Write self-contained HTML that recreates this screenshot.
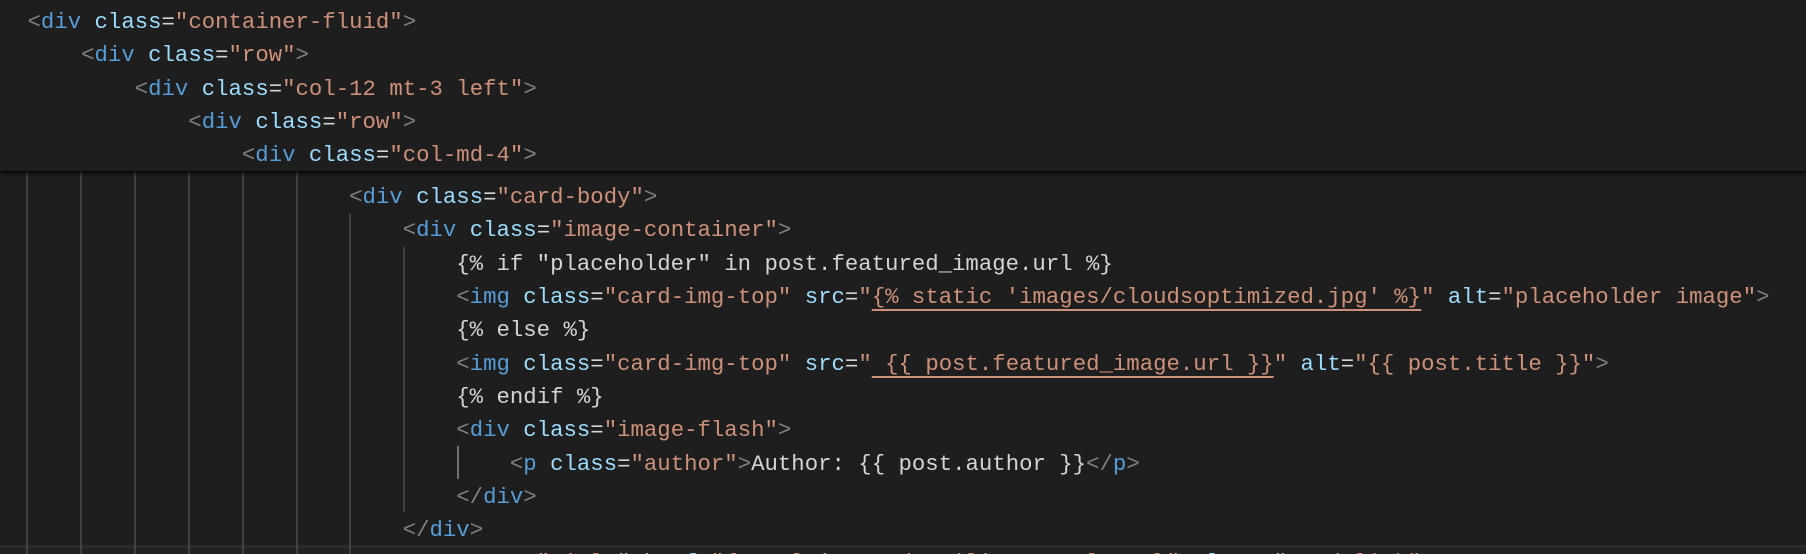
<!DOCTYPE html>
<html><head><meta charset="utf-8"><style>
html,body{margin:0;padding:0;background:#1e1e1e;width:1806px;height:554px;overflow:hidden;}
.ed{position:relative;width:1806px;height:554px;font-family:"Liberation Mono",monospace;font-size:22.33px;}
.l{position:absolute;left:27.5px;height:33.33px;line-height:33.33px;white-space:pre;color:#d4d4d4;}
.p{color:#808080}.t{color:#569cd6}.a{color:#9cdcfe}.s{color:#ce9178}
.u{text-decoration:underline;text-decoration-color:#ce9178;text-decoration-thickness:2px;text-underline-offset:6px;}
.g{position:absolute;width:2px;background:#404040;}
.hdr{position:absolute;left:0;top:0;width:1806px;height:171px;background:#1e1e1e;box-shadow:0 2px 4px #000;z-index:2;}
.cur{position:absolute;left:0;top:545px;width:1806px;height:9px;background:#222;border-top:3px solid #2c2c2c;}
</style></head><body><div class="ed">
<div class="cur"></div>
<div class="g" style="left:26px;top:171px;height:383px"></div>
<div class="g" style="left:80px;top:171px;height:383px"></div>
<div class="g" style="left:134px;top:171px;height:383px"></div>
<div class="g" style="left:188px;top:171px;height:383px"></div>
<div class="g" style="left:242px;top:171px;height:383px"></div>
<div class="g" style="left:296px;top:171px;height:383px"></div>
<div class="g" style="left:349px;top:214px;height:340px"></div>
<div class="g" style="left:403px;top:247px;height:265px"></div>
<div class="g" style="left:457px;top:446px;height:33px;background:#707070"></div>

<div class="l" style="top:181px">                        <span class="p">&lt;</span><span class="t">div</span> <span class="a">class</span>=<span class="s">"card-body"</span><span class="p">&gt;</span></div>
<div class="l" style="top:214px">                            <span class="p">&lt;</span><span class="t">div</span> <span class="a">class</span>=<span class="s">"image-container"</span><span class="p">&gt;</span></div>
<div class="l" style="top:248px">                                {% if "placeholder" in post.featured_image.url %}</div>
<div class="l" style="top:281px">                                <span class="p">&lt;</span><span class="t">img</span> <span class="a">class</span>=<span class="s">"card-img-top"</span> <span class="a">src</span>=<span class="s">"<span class="u">{% static 'images/cloudsoptimized.jpg' %}</span>"</span> <span class="a">alt</span>=<span class="s">"placeholder image"</span><span class="p">&gt;</span></div>
<div class="l" style="top:314px">                                {% else %}</div>
<div class="l" style="top:348px">                                <span class="p">&lt;</span><span class="t">img</span> <span class="a">class</span>=<span class="s">"card-img-top"</span> <span class="a">src</span>=<span class="s">"<span class="u"> {{ post.featured_image.url }}</span>"</span> <span class="a">alt</span>=<span class="s">"{{ post.title }}"</span><span class="p">&gt;</span></div>
<div class="l" style="top:381px">                                {% endif %}</div>
<div class="l" style="top:414px">                                <span class="p">&lt;</span><span class="t">div</span> <span class="a">class</span>=<span class="s">"image-flash"</span><span class="p">&gt;</span></div>
<div class="l" style="top:448px">                                    <span class="p">&lt;</span><span class="t">p</span> <span class="a">class</span>=<span class="s">"author"</span><span class="p">&gt;</span>Author: {{ post.author }}<span class="p">&lt;/</span><span class="t">p</span><span class="p">&gt;</span></div>
<div class="l" style="top:481px">                                <span class="p">&lt;/</span><span class="t">div</span><span class="p">&gt;</span></div>
<div class="l" style="top:514px">                            <span class="p">&lt;/</span><span class="t">div</span><span class="p">&gt;</span></div>
<div class="l" style="top:547px">                                      <span class="s">"title"</span> <span class="a">href</span>=<span class="s">"{% url 'post_detail' post.slug %}"</span> <span class="a">class</span>=<span class="s">"read-link"</span><span class="p">&gt;</span></div>

<div class="hdr">
<div class="l" style="top:6px"><span class="p">&lt;</span><span class="t">div</span> <span class="a">class</span>=<span class="s">"container-fluid"</span><span class="p">&gt;</span></div>
<div class="l" style="top:39px">    <span class="p">&lt;</span><span class="t">div</span> <span class="a">class</span>=<span class="s">"row"</span><span class="p">&gt;</span></div>
<div class="l" style="top:73px">        <span class="p">&lt;</span><span class="t">div</span> <span class="a">class</span>=<span class="s">"col-12 mt-3 left"</span><span class="p">&gt;</span></div>
<div class="l" style="top:106px">            <span class="p">&lt;</span><span class="t">div</span> <span class="a">class</span>=<span class="s">"row"</span><span class="p">&gt;</span></div>
<div class="l" style="top:139px">                <span class="p">&lt;</span><span class="t">div</span> <span class="a">class</span>=<span class="s">"col-md-4"</span><span class="p">&gt;</span></div>
</div>
</div></body></html>
